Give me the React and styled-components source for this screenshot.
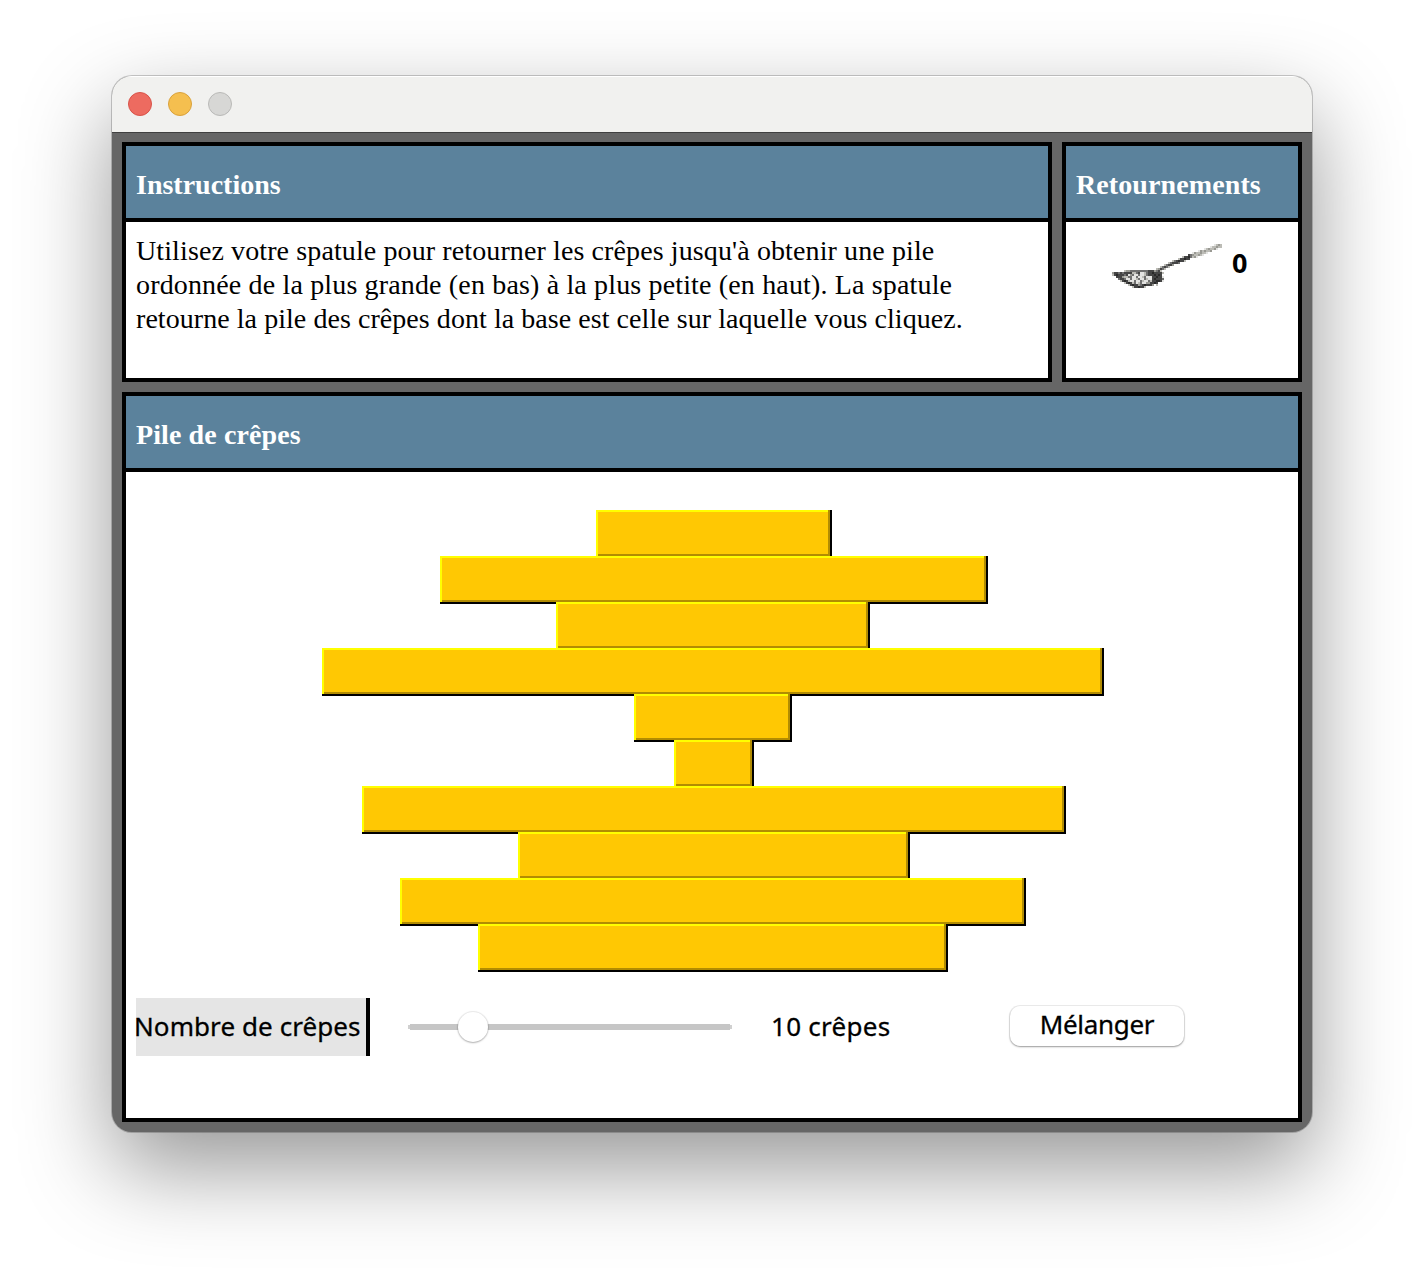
import React, { useState } from "react";
import styled, { createGlobalStyle } from "styled-components";

const GlobalStyle = createGlobalStyle`
  * { box-sizing: border-box; }
  body { margin: 0; background: #fff; }
`;

const Desktop = styled.div`
  height: 1280px;
  padding: 76px 112px 148px;
  overflow: hidden;
  background: #fff;
`;

const Window = styled.main`
  display: flex;
  flex-direction: column;
  height: 1056px;
  border-radius: 20px;
  overflow: hidden;
  background: #666;
  box-shadow: 0 0 0 1px rgba(0, 0, 0, 0.2), 0 36px 90px rgba(0, 0, 0, 0.41);
`;

const TitleBar = styled.header`
  display: flex;
  align-items: center;
  gap: 16px;
  height: 57px;
  flex: none;
  padding: 0 16px;
  background: #f1f1ef;
  border-bottom: 1px solid #404040;
  box-shadow: inset 0 1px #fff;
`;

const Light = styled.span`
  width: 24px;
  height: 24px;
  border-radius: 50%;
  background: ${(p) => p.$fill};
  border: 1px solid ${(p) => p.$edge};
`;

const Content = styled.div`
  display: grid;
  grid-template-columns: 930px 240px;
  grid-template-rows: 240px 730px;
  gap: 10px;
  padding: 9px 10px 10px;
`;

const Panel = styled.section`
  display: flex;
  flex-direction: column;
  grid-column: ${(p) => (p.$wide ? "1 / -1" : "auto")};
  border: 4px solid #000;
  background: #fff;
`;

const PanelTitle = styled.h2`
  flex: none;
  height: 76px;
  margin: 0;
  padding: 22px 10px 0;
  border-bottom: 4px solid #000;
  background: #5b829c;
  color: #fff;
  font: bold 28px/34px "Liberation Serif", "Times New Roman", serif;
  letter-spacing: ${(p) => p.$spacing || 0}px;
`;

const Instructions = styled.p`
  margin: 0;
  padding: 12px 10px;
  color: #000;
  font: 28px/34px "Liberation Serif", "Times New Roman", serif;
  white-space: nowrap;
`;

const Line = styled.span`
  display: block;
  letter-spacing: ${(p) => p.$spacing}px;
`;

const Counter = styled.div`
  display: flex;
  align-items: flex-start;
  gap: 8px;
  padding: 22px 0 0 46px;
`;

const Count = styled.output`
  padding-top: 2px;
  color: #000;
  font: bold 27px/34px "Noto Sans", sans-serif;
`;

const Stack = styled.div`
  display: flex;
  flex-direction: column;
  align-items: center;
  padding-top: 38px;
`;

const Pancake = styled.button`
  flex: none;
  width: ${(p) => p.$size * 78}px;
  height: 46px;
  margin: 0 0 0 ${(p) => (p.$size % 2 ? 2 : 0)}px;
  padding: 0;
  border: 0;
  position: relative;
  background: #ffc803;
  box-shadow: inset -2px 0 #b28c02, inset 2px 0 #ff0, inset 0 -2px #b28c02,
    inset 0 2px #ff0, 2px 0 #000, 0 2px #000, 2px 2px #000;
`;

const Controls = styled.div`
  display: flex;
  align-items: center;
  height: 58px;
  margin: 28px 0 0 10px;
  color: #000;
  font: 26px/34px "Noto Sans", sans-serif;
  -webkit-text-stroke: 0.3px #000;
`;

const SliderLabel = styled.label`
  display: flex;
  align-items: center;
  width: 234px;
  height: 58px;
  padding-bottom: 2px;
  border-right: 4px solid #000;
  background: #e5e5e5;
  white-space: nowrap;
  letter-spacing: 0.08px;
  text-indent: -2px;
`;

const Slider = styled.input`
  appearance: none;
  width: 324px;
  height: 34px;
  margin: 0 0 0 38px;
  background: linear-gradient(#c6c6c6, #c6c6c6) center / 320px 6px no-repeat,
    linear-gradient(#d0d0d0, #d0d0d0) center / 324px 4px no-repeat;
  &::-webkit-slider-thumb {
    appearance: none;
    width: 30px;
    height: 30px;
    border-radius: 50%;
    background: #fff;
    box-shadow: 0 0 1px 1px rgba(0, 0, 0, 0.08), 0 1px 2px rgba(0, 0, 0, 0.25);
  }
`;

const SliderValue = styled.output`
  width: 239px;
  margin-left: 39px;
  padding-bottom: 2px;
  letter-spacing: 0.27px;
`;

const ShuffleButton = styled.button`
  width: 174px;
  height: 40px;
  margin-bottom: 2px;
  padding: 0 0 4px;
  border: 0;
  border-radius: 10px;
  background: #fff;
  color: #000;
  font: 26px/34px "Noto Sans", sans-serif;
  letter-spacing: -0.3px;
  box-shadow: 0 0 0 1px rgba(0, 0, 0, 0.07), 0 1px 2px rgba(0, 0, 0, 0.35);
`;

const SHADES = { 1: "#292929", 2: "#444", 3: "#707070", 4: "#999993", 5: "#bcbcb6", 6: "#e4e4e2" };

const SPATULA = [
  "                                                   6545 ",
  "                                                 655455 ",
  "                                              6545546   ",
  "                                           6454554      ",
  "                                        64554556        ",
  "                                      23455456          ",
  "                                   52213546             ",
  "                                 522122                 ",
  "                              5321225                   ",
  "                            532223                      ",
  "                          53224                         ",
  "                        53235                           ",
  "                      54235                             ",
  "      5443333333332224325                               ",
  "42232322225532665322122225                              ",
  "5212223264366366532221212                               ",
  "  222455336636653666221226                              ",
  "   32236636653663566212223                              ",
  "    5212566366356635221126                              ",
  "      52125365366442212                                 ",
  "        5212243212224 5                                 ",
  "          5221225                                       ",
];

function Spatula() {
  return (
    <svg width="112" height="44" viewBox="0 0 56 22" shapeRendering="crispEdges" aria-hidden="true">
      {SPATULA.flatMap((row, y) =>
        [...row].map((shade, x) =>
          shade === " " ? null : (
            <rect key={`${x}-${y}`} x={x} y={y} width="1" height="1" fill={SHADES[shade]} />
          )
        )
      )}
    </svg>
  );
}

const START = [3, 7, 4, 10, 2, 1, 9, 5, 8, 6];

export default function App() {
  const [stack, setStack] = useState(START);
  const [flips, setFlips] = useState(0);

  const flip = (index) => {
    setStack([...stack.slice(0, index + 1).reverse(), ...stack.slice(index + 1)]);
    setFlips(flips + 1);
  };

  const shuffle = () => {
    setStack([...stack].sort(() => Math.random() - 0.5));
    setFlips(0);
  };

  return (
    <Desktop>
      <GlobalStyle />
      <Window>
        <TitleBar>
          <Light $fill="#ed6b60" $edge="#d85349" />
          <Light $fill="#f5bf4f" $edge="#d9a13c" />
          <Light $fill="#d7d7d5" $edge="#b9b9b7" />
        </TitleBar>
        <Content>
          <Panel>
            <PanelTitle>Instructions</PanelTitle>
            <Instructions>
              <Line $spacing={0.11}>
                Utilisez votre spatule pour retourner les crêpes jusqu'à obtenir une pile
              </Line>
              <Line $spacing={0.155}>
                ordonnée de la plus grande (en bas) à la plus petite (en haut). La spatule
              </Line>
              <Line $spacing={0.055}>
                retourne la pile des crêpes dont la base est celle sur laquelle vous cliquez.
              </Line>
            </Instructions>
          </Panel>
          <Panel>
            <PanelTitle $spacing={0.1}>Retournements</PanelTitle>
            <Counter>
              <Spatula />
              <Count>{flips}</Count>
            </Counter>
          </Panel>
          <Panel $wide>
            <PanelTitle $spacing={0.1}>Pile de crêpes</PanelTitle>
            <Stack>
              {stack.map((size, i) => (
                <Pancake key={size} $size={size} onClick={() => flip(i)} />
              ))}
            </Stack>
            <Controls>
              <SliderLabel htmlFor="count">Nombre de crêpes</SliderLabel>
              <Slider id="count" type="range" min="4" max="36" defaultValue="9.4" step="0.1" />
              <SliderValue>{stack.length} crêpes</SliderValue>
              <ShuffleButton onClick={shuffle}>Mélanger</ShuffleButton>
            </Controls>
          </Panel>
        </Content>
      </Window>
    </Desktop>
  );
}
